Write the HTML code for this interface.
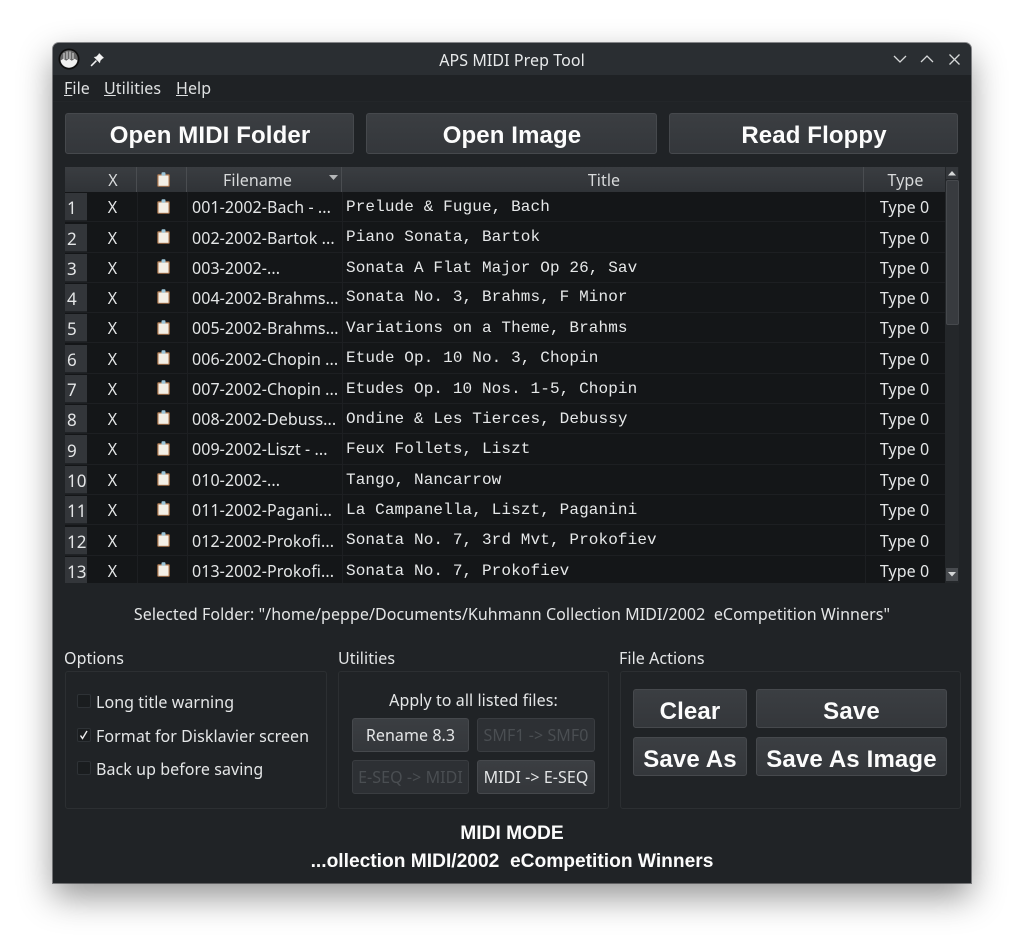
<!DOCTYPE html>
<html><head><meta charset="utf-8"><title>APS MIDI Prep Tool</title>
<style>
html,body{margin:0;padding:0;width:1024px;height:946px;background:#fff;overflow:hidden}
body{position:relative;font-family:"Noto Sans","Noto Sans CJK JP",sans-serif;font-size:16px;letter-spacing:.07px;color:#e4e6e7}
div,span.a,svg{position:absolute}
.t{white-space:nowrap;line-height:24px;height:24px}
.c{text-align:center}
#win{left:53px;top:43px;width:918px;height:840px;background:#202326;border-radius:6px 6px 0 0;box-shadow:0 14px 34px rgba(0,0,0,.42),0 0 0 1px rgba(70,72,76,.6)}
.b{background:linear-gradient(#3b3e42,#34373b);border:1px solid #46494d;border-radius:3px;box-sizing:border-box;text-align:center;font-family:"Liberation Sans",sans-serif;font-weight:bold;color:#fcfcfc;white-space:nowrap}
.big{font-size:24px;line-height:44px;letter-spacing:.12px;padding-left:1px}
.mid{font-size:24px;line-height:43px;letter-spacing:.15px}
.sm{font-family:"Noto Sans","Noto Sans CJK JP",sans-serif;font-weight:normal;font-size:16px;line-height:33px;letter-spacing:.07px;color:#e4e6e7}
.dis{color:#4a4e52;background:#2d3034;border-color:#3a3d41}
.g{border:1px solid #2c2f32;border-radius:3px;box-sizing:border-box;top:671px;height:138px}
.h{top:167px;height:25px;background:linear-gradient(#3a3d41,#303337);border-right:1px solid #4a4d51;box-sizing:border-box;text-align:center;line-height:27px;white-space:nowrap;color:#d8dadb}
.r{left:65px;width:880px;height:30px;background:#141618;border-bottom:1px solid #1d1f22;box-sizing:border-box}
.n{left:0;top:1px;width:22px;height:28px;background:#33363a;border-bottom:1px solid #202326;box-sizing:border-box;line-height:30px;padding-left:2px;font-size:17px;letter-spacing:0;color:#e4e6e7}
.x{left:23px;width:49px;text-align:center;line-height:30px}
.f{left:127px;width:150px;line-height:30px;white-space:nowrap}
.m{left:281px;top:0;line-height:30px;font-family:"Liberation Mono",monospace;font-size:16px;letter-spacing:.11px;white-space:pre;color:#e6e8e9}
.y{left:799px;width:81px;text-align:center;line-height:30px}
.ic{left:92px;top:6px}
.cb{left:77px;width:14px;height:14px;background:#1a1d1f;border:1px solid #2e3236;box-sizing:border-box;border-radius:2px}
</style></head><body>
<div id="win"></div>

<!-- title bar -->
<div style="left:53px;top:43px;width:918px;height:32px;background:#2a2e32;border-radius:6px 6px 0 0"></div>
<svg style="left:58px;top:48px" width="22" height="22" viewBox="0 0 22 22"><circle cx="11" cy="11" r="10.500" fill="#0e0e0e"/><circle cx="11" cy="11" r="8.800" fill="#666"/><path d="M2.600 12.500l2.800-1.800 2.800 2 2.800-2 2.800 2 2.800-2 2.800 1.800a8.500 8.500 0 0 1-16.800 0z" fill="#f0f0f0"/><path d="M6 5v6M9 3.500v7.500M12 3.500v7.500M15 5v6" stroke="#ddd" stroke-width="1"/></svg>
<svg style="left:90px;top:52px" width="15" height="15" viewBox="0 0 14 14"><path d="M8.500 1L13 5.500 11.500 6.300 9.700 8.200 9.300 10.500 3.500 4.700 5.800 4.300 7.700 2.500z" fill="#f2f2f2"/><path d="M6 8L1 13" stroke="#f2f2f2" stroke-width="1.400"/></svg>
<div class="t c" style="left:53px;top:48px;width:918px;color:#e8eaeb">APS MIDI Prep Tool</div>
<svg style="left:890px;top:50px" width="76" height="20" viewBox="0 0 76 20" fill="none" stroke="#d6d8d9" stroke-width="1.300"><path d="M4 6l6 6 6-6"/><path d="M31 12l6-6 6 6"/><path d="M59.500 4.500l10 10M69.500 4.500l-10 10"/></svg>

<!-- menu -->
<div style="left:53px;top:75px;width:918px;height:27px;background:#1f2225;border-bottom:1px solid #232629;box-sizing:border-box"></div>
<div class="t" style="left:64px;top:76px;color:#dfe1e2"><u>F</u>ile</div>
<div class="t" style="left:104px;top:76px;color:#dfe1e2"><u>U</u>tilities</div>
<div class="t" style="left:176px;top:76px;color:#dfe1e2"><u>H</u>elp</div>

<!-- top buttons -->
<div class="b big" style="left:65px;top:113px;width:289px;height:41px">Open MIDI Folder</div>
<div class="b big" style="left:366px;top:113px;width:291px;height:41px">Open Image</div>
<div class="b big" style="left:669px;top:113px;width:289px;height:41px">Read Floppy</div>

<!-- table header -->
<div class="h" style="left:65px;width:72px;padding-left:25px">X</div>
<div class="h" style="left:137px;width:50px"></div>
<svg style="left:157px;top:172px" width="13" height="15" viewBox="0 0 13 15"><rect x=".3" y="2.300" width="12.400" height="12.500" rx="1" fill="#b07a50"/><rect x="1.500" y="3.500" width="10" height="10.300" fill="#f3efe6"/><rect x="4.500" y=".3" width="4" height="3.500" rx="1" fill="#9cc4d6"/></svg>
<div class="h" style="left:187px;width:155px;padding-right:13px">Filename</div>
<svg style="left:329px;top:175px" width="9" height="6" viewBox="0 0 9 6"><path d="M0 0h9L4.500 5z" fill="#b5b7b9"/></svg>
<div class="h" style="left:342px;width:522px;padding-left:3px">Title</div>
<div class="h" style="left:864px;width:81px;border-right:0;padding-left:2px">Type</div>

<!-- rows -->
<div style="left:65px;top:192px;width:880px;height:391px;background:#141618"></div>
<div class="r" style="top:192px"><div class="n">1</div><div class="x">X</div><svg class="ic" style="top:7px" width="13" height="15" viewBox="0 0 13 15"><rect x=".3" y="2.300" width="12.400" height="12.500" rx="1" fill="#b07a50"/><rect x="1.500" y="3.500" width="10" height="10.300" fill="#f3efe6"/><rect x="4.500" y=".3" width="4" height="3.500" rx="1" fill="#9cc4d6"/></svg><div class="f">001-2002-Bach - ...</div><div class="m">Prelude &amp; Fugue, Bach</div><div class="y">Type 0</div></div>
<div class="r" style="top:223px"><div class="n">2</div><div class="x">X</div><svg class="ic" width="13" height="15" viewBox="0 0 13 15"><rect x=".3" y="2.300" width="12.400" height="12.500" rx="1" fill="#b07a50"/><rect x="1.500" y="3.500" width="10" height="10.300" fill="#f3efe6"/><rect x="4.500" y=".3" width="4" height="3.500" rx="1" fill="#9cc4d6"/></svg><div class="f">002-2002-Bartok ...</div><div class="m" style="top:-1px">Piano Sonata, Bartok</div><div class="y">Type 0</div></div>
<div class="r" style="top:253px"><div class="n">3</div><div class="x">X</div><svg class="ic" width="13" height="15" viewBox="0 0 13 15"><rect x=".3" y="2.300" width="12.400" height="12.500" rx="1" fill="#b07a50"/><rect x="1.500" y="3.500" width="10" height="10.300" fill="#f3efe6"/><rect x="4.500" y=".3" width="4" height="3.500" rx="1" fill="#9cc4d6"/></svg><div class="f">003-2002-...</div><div class="m">Sonata A Flat Major Op 26, Sav</div><div class="y">Type 0</div></div>
<div class="r" style="top:283px"><div class="n">4</div><div class="x">X</div><svg class="ic" width="13" height="15" viewBox="0 0 13 15"><rect x=".3" y="2.300" width="12.400" height="12.500" rx="1" fill="#b07a50"/><rect x="1.500" y="3.500" width="10" height="10.300" fill="#f3efe6"/><rect x="4.500" y=".3" width="4" height="3.500" rx="1" fill="#9cc4d6"/></svg><div class="f">004-2002-Brahms...</div><div class="m" style="top:-1px">Sonata No. 3, Brahms, F Minor</div><div class="y">Type 0</div></div>
<div class="r" style="top:313px"><div class="n">5</div><div class="x">X</div><svg class="ic" style="top:7px" width="13" height="15" viewBox="0 0 13 15"><rect x=".3" y="2.300" width="12.400" height="12.500" rx="1" fill="#b07a50"/><rect x="1.500" y="3.500" width="10" height="10.300" fill="#f3efe6"/><rect x="4.500" y=".3" width="4" height="3.500" rx="1" fill="#9cc4d6"/></svg><div class="f">005-2002-Brahms...</div><div class="m">Variations on a Theme, Brahms</div><div class="y">Type 0</div></div>
<div class="r" style="top:344px"><div class="n">6</div><div class="x">X</div><svg class="ic" width="13" height="15" viewBox="0 0 13 15"><rect x=".3" y="2.300" width="12.400" height="12.500" rx="1" fill="#b07a50"/><rect x="1.500" y="3.500" width="10" height="10.300" fill="#f3efe6"/><rect x="4.500" y=".3" width="4" height="3.500" rx="1" fill="#9cc4d6"/></svg><div class="f">006-2002-Chopin ...</div><div class="m" style="top:-1px">Etude Op. 10 No. 3, Chopin</div><div class="y">Type 0</div></div>
<div class="r" style="top:374px"><div class="n">7</div><div class="x">X</div><svg class="ic" width="13" height="15" viewBox="0 0 13 15"><rect x=".3" y="2.300" width="12.400" height="12.500" rx="1" fill="#b07a50"/><rect x="1.500" y="3.500" width="10" height="10.300" fill="#f3efe6"/><rect x="4.500" y=".3" width="4" height="3.500" rx="1" fill="#9cc4d6"/></svg><div class="f">007-2002-Chopin ...</div><div class="m">Etudes Op. 10 Nos. 1-5, Chopin</div><div class="y">Type 0</div></div>
<div class="r" style="top:404px"><div class="n">8</div><div class="x">X</div><svg class="ic" width="13" height="15" viewBox="0 0 13 15"><rect x=".3" y="2.300" width="12.400" height="12.500" rx="1" fill="#b07a50"/><rect x="1.500" y="3.500" width="10" height="10.300" fill="#f3efe6"/><rect x="4.500" y=".3" width="4" height="3.500" rx="1" fill="#9cc4d6"/></svg><div class="f">008-2002-Debuss...</div><div class="m">Ondine &amp; Les Tierces, Debussy</div><div class="y">Type 0</div></div>
<div class="r" style="top:434px;height:31px"><div class="n" style="height:29px;line-height:31px">9</div><div class="x">X</div><svg class="ic" style="top:7px" width="13" height="15" viewBox="0 0 13 15"><rect x=".3" y="2.300" width="12.400" height="12.500" rx="1" fill="#b07a50"/><rect x="1.500" y="3.500" width="10" height="10.300" fill="#f3efe6"/><rect x="4.500" y=".3" width="4" height="3.500" rx="1" fill="#9cc4d6"/></svg><div class="f">009-2002-Liszt - ...</div><div class="m">Feux Follets, Liszt</div><div class="y">Type 0</div></div>
<div class="r" style="top:465px"><div class="n">10</div><div class="x">X</div><svg class="ic" width="13" height="15" viewBox="0 0 13 15"><rect x=".3" y="2.300" width="12.400" height="12.500" rx="1" fill="#b07a50"/><rect x="1.500" y="3.500" width="10" height="10.300" fill="#f3efe6"/><rect x="4.500" y=".3" width="4" height="3.500" rx="1" fill="#9cc4d6"/></svg><div class="f">010-2002-...</div><div class="m">Tango, Nancarrow</div><div class="y">Type 0</div></div>
<div class="r" style="top:495px"><div class="n">11</div><div class="x">X</div><svg class="ic" width="13" height="15" viewBox="0 0 13 15"><rect x=".3" y="2.300" width="12.400" height="12.500" rx="1" fill="#b07a50"/><rect x="1.500" y="3.500" width="10" height="10.300" fill="#f3efe6"/><rect x="4.500" y=".3" width="4" height="3.500" rx="1" fill="#9cc4d6"/></svg><div class="f">011-2002-Pagani...</div><div class="m">La Campanella, Liszt, Paganini</div><div class="y">Type 0</div></div>
<div class="r" style="top:526px"><div class="n">12</div><div class="x">X</div><svg class="ic" width="13" height="15" viewBox="0 0 13 15"><rect x=".3" y="2.300" width="12.400" height="12.500" rx="1" fill="#b07a50"/><rect x="1.500" y="3.500" width="10" height="10.300" fill="#f3efe6"/><rect x="4.500" y=".3" width="4" height="3.500" rx="1" fill="#9cc4d6"/></svg><div class="f">012-2002-Prokofi...</div><div class="m" style="top:-1px">Sonata No. 7, 3rd Mvt, Prokofiev</div><div class="y">Type 0</div></div>
<div class="r" style="top:556px;height:27px;border-bottom:0"><div class="n" style="height:26px;border:0">13</div><div class="x">X</div><svg class="ic" width="13" height="15" viewBox="0 0 13 15"><rect x=".3" y="2.300" width="12.400" height="12.500" rx="1" fill="#b07a50"/><rect x="1.500" y="3.500" width="10" height="10.300" fill="#f3efe6"/><rect x="4.500" y=".3" width="4" height="3.500" rx="1" fill="#9cc4d6"/></svg><div class="f">013-2002-Prokofi...</div><div class="m">Sonata No. 7, Prokofiev</div><div class="y">Type 0</div></div>

<!-- column grid lines -->
<div style="left:137px;top:192px;width:1px;height:391px;background:#1d1f22"></div>
<div style="left:187px;top:192px;width:1px;height:391px;background:#1d1f22"></div>
<div style="left:342px;top:192px;width:1px;height:391px;background:#1d1f22"></div>
<div style="left:865px;top:192px;width:1px;height:391px;background:#1d1f22"></div>

<!-- scrollbar -->
<div style="left:945px;top:167px;width:14px;height:416px;background:#24272a"></div>
<div style="left:946px;top:167px;width:12px;height:12px;background:#34373b"></div>
<svg style="left:948px;top:171px" width="8" height="5" viewBox="0 0 8 5"><path d="M0 4.500h8L4 0z" fill="#d5d7d8"/></svg>
<div style="left:946px;top:180px;width:13px;height:145px;background:#383b3f;border:1px solid #46494d;box-sizing:border-box;border-radius:2px"></div>
<div style="left:946px;top:568px;width:12px;height:13px;background:#484b4f"></div>
<svg style="left:948px;top:572px" width="8" height="5" viewBox="0 0 8 5"><path d="M0 0h8L4 4.500z" fill="#d5d7d8"/></svg>

<!-- folder -->
<div class="t c" style="left:53px;top:602px;width:918px">Selected Folder: "/home/peppe/Documents/Kuhmann Collection MIDI/2002&nbsp; eCompetition Winners"</div>

<!-- groups -->
<div class="t" style="left:64px;top:646px">Options</div>
<div class="t" style="left:338px;top:646px">Utilities</div>
<div class="t" style="left:619px;top:646px">File Actions</div>
<div class="g" style="left:65px;width:262px"></div>
<div class="g" style="left:338px;width:271px"></div>
<div class="g" style="left:620px;width:341px"></div>

<div class="cb" style="top:694px"></div>
<div class="t" style="left:96px;top:690px">Long title warning</div>
<div class="cb" style="top:728px"></div>
<svg style="left:78px;top:729px" width="12" height="12" viewBox="0 0 12 12"><path d="M2.500 6.500l2 3 4.500-7.500" fill="none" stroke="#eee" stroke-width="1.400"/></svg>
<div class="t" style="left:96px;top:724px">Format for Disklavier screen</div>
<div class="cb" style="top:761px"></div>
<div class="t" style="left:96px;top:757px">Back up before saving</div>

<div class="t c" style="left:338px;top:688px;width:271px">Apply to all listed files:</div>
<div class="b sm" style="left:352px;top:718px;width:117px;height:34px">Rename 8.3</div>
<div class="b sm dis" style="left:477px;top:718px;width:118px;height:34px">SMF1 -&gt; SMF0</div>
<div class="b sm dis" style="left:352px;top:760px;width:117px;height:34px">E-SEQ -&gt; MIDI</div>
<div class="b sm" style="left:477px;top:760px;width:118px;height:34px">MIDI -&gt; E-SEQ</div>

<div class="b mid" style="left:633px;top:689px;width:114px;height:39px">Clear</div>
<div class="b mid" style="left:756px;top:689px;width:191px;height:39px">Save</div>
<div class="b mid" style="left:633px;top:737px;width:114px;height:39px">Save As</div>
<div class="b mid" style="left:756px;top:737px;width:191px;height:39px">Save As Image</div>

<!-- footer -->
<div class="t c" style="left:53px;top:822px;width:918px;font-family:'Liberation Sans',sans-serif;font-weight:bold;font-size:19.200px;letter-spacing:0;color:#fcfcfc">MIDI MODE</div>
<div class="t c" style="left:53px;top:850px;width:918px;font-family:'Liberation Sans',sans-serif;font-weight:bold;font-size:19.200px;letter-spacing:0;color:#fcfcfc;white-space:pre">...ollection MIDI/2002  eCompetition Winners</div>
</body></html>
